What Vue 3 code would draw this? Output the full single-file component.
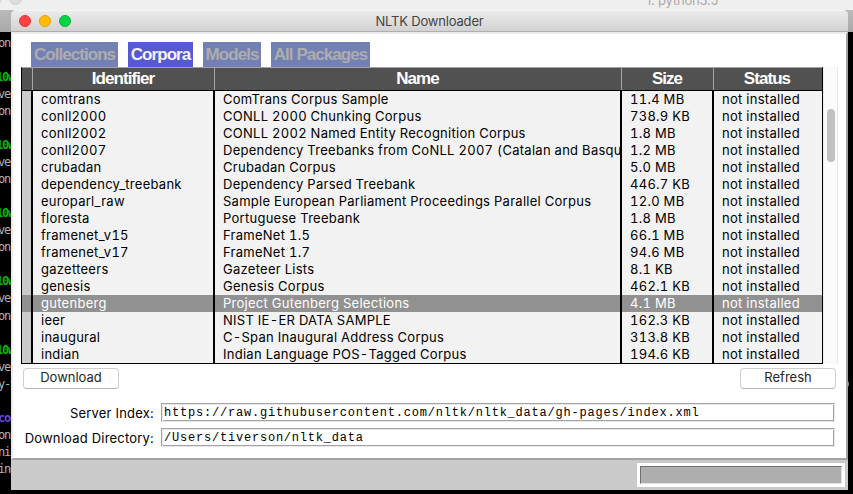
<script setup>
import { ref } from 'vue'

const tabs = ['Collections', 'Corpora', 'Models', 'All Packages']
const activeTab = ref('Corpora')
const selected = ref('gutenberg')

const packages = [
  ['comtrans', 'ComTrans Corpus Sample', '11.4 MB'],
  ['conll2000', 'CONLL 2000 Chunking Corpus', '738.9 KB'],
  ['conll2002', 'CONLL 2002 Named Entity Recognition Corpus', '1.8 MB'],
  ['conll2007', 'Dependency Treebanks from CoNLL 2007 (Catalan and Basqu', '1.2 MB'],
  ['crubadan', 'Crubadan Corpus', '5.0 MB'],
  ['dependency_treebank', 'Dependency Parsed Treebank', '446.7 KB'],
  ['europarl_raw', 'Sample European Parliament Proceedings Parallel Corpus', '12.0 MB'],
  ['floresta', 'Portuguese Treebank', '1.8 MB'],
  ['framenet_v15', 'FrameNet 1.5', '66.1 MB'],
  ['framenet_v17', 'FrameNet 1.7', '94.6 MB'],
  ['gazetteers', 'Gazeteer Lists', '8.1 KB'],
  ['genesis', 'Genesis Corpus', '462.1 KB'],
  ['gutenberg', 'Project Gutenberg Selections', '4.1 MB'],
  ['ieer', 'NIST IE-ER DATA SAMPLE', '162.3 KB'],
  ['inaugural', 'C-Span Inaugural Address Corpus', '313.8 KB'],
  ['indian', 'Indian Language POS-Tagged Corpus', '194.6 KB'],
].map(([id, name, size]) => ({ id, name, size, status: 'not installed' }))

const columns = [
  { key: 'id', title: 'Identifier' },
  { key: 'name', title: 'Name' },
  { key: 'size', title: 'Size' },
  { key: 'status', title: 'Status' },
]

// Visible right edge of the terminal session behind the window
const terminal = [
  'onc', '', '10w', 'ver', 'onc', '', '10w', 'ver', 'onc', '', '10w', 'ver', 'onc',
  '', '10w', 'ver', 'onc', '', '10w', 'ver', 'y-v', '', 'con', 'onc', 'nin', 'ing',
]
const tone = (t) => (t === '10w' ? 'green' : t === 'con' ? 'violet' : '')
</script>

<template>
  <div class="desktop">
    <div class="back-title">
      <i class="back-dot first"></i><i class="back-dot second"></i>
      <span>1. python3.5</span>
    </div>
    <div class="back-tabs"></div>
    <div class="terminal">
      <div v-for="(t, i) in terminal" :key="i" class="line" :class="tone(t)">{{ t }}</div>
    </div>
    <i class="speck"></i>

    <section class="window">
      <header class="titlebar">
        <div class="lights"><i class="close"></i><i class="min"></i><i class="max"></i></div>
        <h1>NLTK Downloader</h1>
      </header>

      <main class="content">
        <nav class="tabs">
          <button
            v-for="t in tabs"
            :key="t"
            class="tab"
            :class="{ active: t === activeTab }"
            @click="activeTab = t"
          >{{ t }}</button>
        </nav>

        <div class="listing">
          <div class="table">
            <div class="row head">
              <div class="cell"></div>
              <div v-for="c in columns" :key="c.key" class="cell">{{ c.title }}</div>
            </div>
            <div
              v-for="p in packages"
              :key="p.id"
              class="row item"
              :class="{ selected: p.id === selected }"
              @click="selected = p.id"
            >
              <div class="cell mark"></div>
              <div v-for="c in columns" :key="c.key" class="cell" :class="'col-' + c.key">{{ p[c.key] }}</div>
            </div>
          </div>
          <div class="scroll"><i class="thumb"></i></div>
        </div>

        <div class="actions">
          <button class="push">Download</button>
          <button class="push">Refresh</button>
        </div>

        <div class="fields">
          <div class="field"><label>Server Index:</label><div class="entry">https://raw.githubusercontent.com/nltk/nltk_data/gh-pages/index.xml</div></div>
          <div class="field"><label>Download Directory:</label><div class="entry">/Users/tiverson/nltk_data</div></div>
        </div>
      </main>

      <footer class="statusbar"><div class="progress"><div class="bar"></div></div></footer>
    </section>
  </div>
</template>

<style>
body { margin: 0; overflow: hidden; }
</style>

<style scoped>
* { box-sizing: border-box; }
.desktop {
  position: relative; width: 853px; height: 494px; overflow: hidden; background: #000;
  font-family: Inter, 'Liberation Sans', sans-serif; font-size: 13px; color: #000;
}
.back-title { position: relative; height: 10px; background: #efefef; overflow: hidden; color: #aaa; }
.back-title span { position: absolute; left: 646px; top: -8px; line-height: 16px; font-size: 13px; letter-spacing: -.2px; white-space: nowrap; }
.back-dot { position: absolute; top: -8px; width: 13px; height: 13px; border-radius: 50%; background: #dcdcdc; border: 1px solid #cfcfcf; }
.back-dot.first { left: -11px; }
.back-dot.second { left: 9px; }
.back-tabs { height: 22px; background: linear-gradient(#bababa, #a9a9a9); }
.terminal { width: 12px; padding-top: 3px; overflow: hidden; font-family: 'DejaVu Sans Mono', monospace; font-size: 12px; color: #b0b0b0; }
.line { height: 17.04px; line-height: 17px; margin-left: -2px; letter-spacing: -1.2px; white-space: nowrap; }
.green { color: #0db30d; font-weight: bold; margin-left: -4px; }
.violet { color: #6048e0; font-weight: bold; }
.speck { position: absolute; left: 847px; top: 382px; width: 2px; height: 4px; background: #8c7460; }

.window {
  position: absolute; left: 11px; top: 10px; width: 837px; height: 480px;
  display: flex; flex-direction: column; background: #cacaca; border-radius: 5px 5px 0 0; overflow: hidden;
}
.titlebar {
  height: 22px; flex: none; display: grid; align-items: center;
  background: linear-gradient(#ebebeb, #d2d2d2); border-top: 1px solid #f5f5f5; border-bottom: 1px solid #aeaeae;
}
.titlebar > * { grid-area: 1 / 1; }
.titlebar h1 { margin: 0; text-align: center; font-size: 13px; line-height: 20px; font-weight: 400; color: #454545; letter-spacing: -.18px; }
.lights { display: flex; gap: 8px; padding-left: 8px; }
.lights i { width: 12px; height: 12px; border-radius: 50%; border: 1px solid; }
.close { background: #fc4444; border-color: #e33437 !important; }
.min { background: #ffbd05; border-color: #e2a000 !important; }
.max { background: #02d444; border-color: #05b436 !important; }

.content {
  height: 428px; flex: none; background: #fff; padding: 8px 8px 0;
  border-style: solid; border-width: 2px; border-color: #ebebeb #a3a3a3 #a3a3a3 #ebebeb;
}
.tabs { display: flex; gap: 10px; padding-left: 10px; height: 25px; }
.tab {
  height: 25px; padding: 0; border: 0; background: #7280b3; color: #adadad; white-space: nowrap;
  font: bold 17px/25px 'Liberation Sans', Arial, sans-serif; letter-spacing: -.95px;
}
.tab:nth-child(1) { width: 87px; }
.tab:nth-child(2) { width: 65px; }
.tab:nth-child(3) { width: 58px; }
.tab:nth-child(4) { width: 99px; }
.tab.active { background: #5659cf; color: #f2f2f2; }

.listing { display: flex; height: 297px; }
.table { width: 802px; height: 297px; border: 1px solid #000; border-top: 1px solid #a2a2a2; background: #f2f2f2; }
.row { display: grid; grid-template-columns: 11px 182px 407px 92px 108px; height: 17px; }
.cell { overflow: hidden; white-space: nowrap; }
.head { height: 23px; background: #515151; color: #fff; font: bold 17px/22px 'Liberation Sans', Arial, sans-serif; letter-spacing: -.95px; border-bottom: 1px solid #000; text-align: center; }
.head .cell + .cell { border-left: 1px solid #a5a5a5; margin-left: -1px; padding-right: 2px; }
.item { line-height: 17px; letter-spacing: .27px; font-feature-settings: 'tnum'; }
.item .cell { border-right: 2px solid #000; padding-left: 8px; }
.item .cell:last-child { border-right: 0; }
.item .mark { background: #cacaca; padding: 0; }
.selected, .selected .mark { background: #919191 !important; color: #fff; }
.scroll { width: 15px; background: #fafafa; border-left: 1px solid #ededed; border-right: 1px solid #e9e9e9; padding: 42px 0 0 3px; }
.thumb { display: block; width: 8px; height: 53px; border-radius: 4px; background: #c1c1c1; }

.actions { display: flex; justify-content: space-between; padding: 4px 2px 0 2px; }
.push {
  width: 96px; height: 21px; padding: 0 0 2px; border: 1px solid #cfcfcf; border-bottom-color: #b5b5b5; border-radius: 4px;
  background: #fff; font: 13px/17px Inter, sans-serif; color: #262626; letter-spacing: 0;
}
.fields { display: grid; gap: 6px; padding-top: 14px; }
.field { display: grid; grid-template-columns: 133px 674px; column-gap: 7px; align-items: center; height: 19px; }
.field label { text-align: right; letter-spacing: .2px; white-space: nowrap; }
.entry {
  height: 19px; padding-left: 2px; border: 1px solid #a3a3a3; border-right-color: #e8e8e8; border-bottom-color: #e8e8e8;
  box-shadow: inset 1px 1px #e8e8e8, inset -1px -1px #a3a3a3;
  font: 12px/18px 'Liberation Mono', monospace; letter-spacing: .79px; white-space: nowrap; overflow: hidden;
}
.statusbar { flex: 1; display: flex; justify-content: flex-end; padding: 3px 3px; }
.progress { width: 208px; height: 24px; background: #fff; padding: 3px; }
.bar { height: 18px; background: #aeaeae; border: 1px solid #707070; border-right-color: #e2e2e2; border-bottom-color: #e2e2e2; }
</style>
